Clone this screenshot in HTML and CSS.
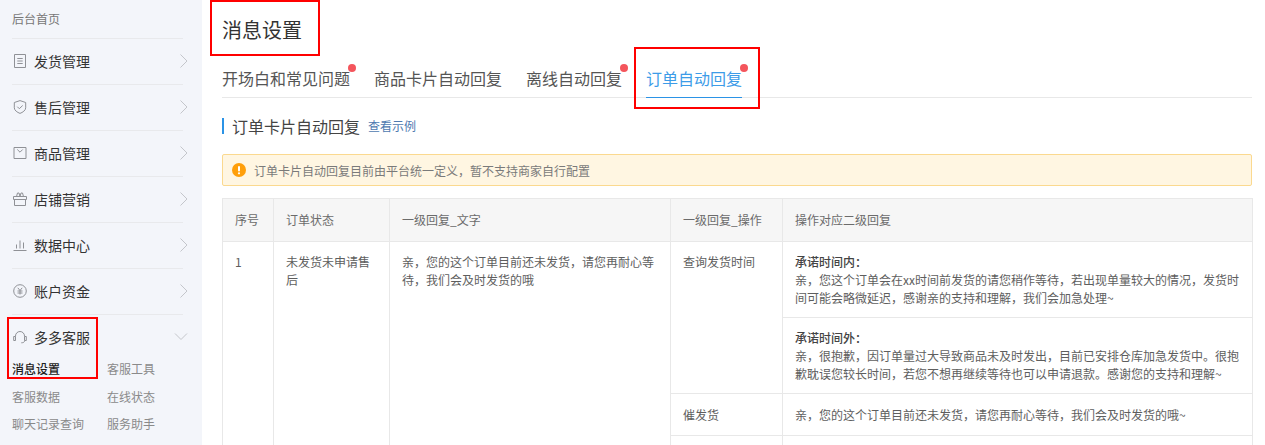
FILE: index.html
```html
<!DOCTYPE html>
<html lang="zh-CN">
<head>
<meta charset="utf-8">
<title>消息设置</title>
<link rel="stylesheet" href="styles.css">
</head>
<body>
<div class="app">
  <aside class="sidebar">
    <div class="home">后台首页</div>
    <div class="nav-item">
      <svg class="nav-icon" viewBox="0 0 14 14"><path d="M1.500 .5h11v13h-11z M4.300 4.500h5.400 M4.300 7h5.400 M4.300 9.500h5.400"/></svg>
      <span class="nav-label">发货管理</span>
      <svg class="chev" viewBox="0 0 10 14"><path d="M1.5 .5l6.500 6.500-6.500 6.500"/></svg>
    </div>
    <div class="nav-item">
      <svg class="nav-icon" viewBox="0 0 14 14"><path d="M7 .6l5.700 1.900v5.300c0 2.600-3 4.600-5.700 5.600-2.700-1-5.700-3-5.700-5.600V2.500z M4.300 6.700l2 2 3.400-3.200"/></svg>
      <span class="nav-label">售后管理</span>
      <svg class="chev" viewBox="0 0 10 14"><path d="M1.5 .5l6.500 6.500-6.500 6.500"/></svg>
    </div>
    <div class="nav-item">
      <svg class="nav-icon" viewBox="0 0 14 14"><path d="M1 1.500h12v11H1z M4.300 3.500L7 6.200l2.700-2.700"/></svg>
      <span class="nav-label">商品管理</span>
      <svg class="chev" viewBox="0 0 10 14"><path d="M1.5 .5l6.500 6.500-6.500 6.500"/></svg>
    </div>
    <div class="nav-item">
      <svg class="nav-icon" viewBox="0 0 14 14"><path d="M.5 4.500h13v3h-13z M1.500 7.500v6h11v-6 M3.500 4.500l1-3.500h1.500l1 3.500 1-3.500h1.500l1 3.500"/></svg>
      <span class="nav-label">店铺营销</span>
      <svg class="chev" viewBox="0 0 10 14"><path d="M1.5 .5l6.500 6.500-6.500 6.500"/></svg>
    </div>
    <div class="nav-item">
      <svg class="nav-icon" viewBox="0 0 14 14"><path d="M.5 12.500h13 M3.500 10.500v-4 M7 10.500v-8 M10.500 10.500v-6"/></svg>
      <span class="nav-label">数据中心</span>
      <svg class="chev" viewBox="0 0 10 14"><path d="M1.5 .5l6.500 6.500-6.500 6.500"/></svg>
    </div>
    <div class="nav-item">
      <svg class="nav-icon" viewBox="0 0 14 14"><circle cx="7" cy="7" r="6.300"/><path d="M4.800 3.800L7 6.500l2.200-2.700 M4.500 7h5 M4.500 9h5 M7 6.500v4"/></svg>
      <span class="nav-label">账户资金</span>
      <svg class="chev" viewBox="0 0 10 14"><path d="M1.5 .5l6.500 6.500-6.500 6.500"/></svg>
    </div>
    <div class="nav-item nav-open">
      <svg class="nav-icon" viewBox="0 0 14 14"><path d="M2.500 6.500V6a4.500 4.500 0 0 1 9 0v.5 M.7 6.500h1.800v4H.7z M11.500 6.500h1.800v4h-1.800z M11.800 10.500c0 1.500-1.500 2.300-3.500 2.300"/></svg>
      <span class="nav-label">多多客服</span>
      <svg class="chev-down" viewBox="0 0 14 10"><path d="M1 1.500l6 6 6-6"/></svg>
    </div>
    <div class="sub-grid">
      <span class="sub-active">消息设置</span><span>客服工具</span>
      <span>客服数据</span><span>在线状态</span>
      <span>聊天记录查询</span><span>服务助手</span>
    </div>
    <div class="mark mark-side"></div>
  </aside>

  <main class="content">
    <h1 class="title">消息设置</h1>
    <div class="mark mark-title"></div>
    <nav class="tabs">
      <div class="tab dot">开场白和常见问题</div>
      <div class="tab">商品卡片自动回复</div>
      <div class="tab dot">离线自动回复</div>
      <div class="tab dot tab-active">订单自动回复</div>
    </nav>
    <div class="mark mark-tab"></div>
    <div class="section-head">
      <h2 class="section-title">订单卡片自动回复</h2>
      <a class="example">查看示例</a>
    </div>
    <div class="notice">
      <svg class="notice-icon" viewBox="0 0 14 14"><circle cx="7" cy="7" r="7" fill="#ff9f0a"/><rect x="6" y="3" width="2" height="5.500" rx="1" fill="#fff"/><circle cx="7" cy="10.300" r="1.100" fill="#fff"/></svg>
      <span>订单卡片自动回复目前由平台统一定义，暂不支持商家自行配置</span>
    </div>
    <table class="grid">
      <colgroup>
        <col class="c1"><col class="c2"><col class="c3"><col class="c4"><col class="c5">
      </colgroup>
      <thead>
        <tr><th>序号</th><th>订单状态</th><th>一级回复_文字</th><th>一级回复_操作</th><th>操作对应二级回复</th></tr>
      </thead>
      <tbody>
        <tr class="r-tall">
          <td rowspan="4">1</td>
          <td rowspan="4">未发货未申请售后</td>
          <td rowspan="4">亲，您的这个订单目前还未发货，请您再耐心等待，我们会及时发货的哦</td>
          <td rowspan="2">查询发货时间</td>
          <td><strong>承诺时间内：</strong><br>亲，您这个订单会在xx时间前发货的请您稍作等待，若出现单量较大的情况，发货时间可能会略微延迟，感谢亲的支持和理解，我们会加急处理~</td>
        </tr>
        <tr class="r-tall">
          <td><strong>承诺时间外：</strong><br>亲，很抱歉，因订单量过大导致商品未及时发出，目前已安排仓库加急发货中。很抱歉耽误您较长时间，若您不想再继续等待也可以申请退款。感谢您的支持和理解~</td>
        </tr>
        <tr class="r-mid">
          <td class="mid">催发货</td>
          <td class="mid">亲，您的这个订单目前还未发货，请您再耐心等待，我们会及时发货的哦~</td>
        </tr>
        <tr class="r-mid"><td>&nbsp;</td><td>&nbsp;</td></tr>
      </tbody>
    </table>
  </main>
</div>
</body>
</html>
```
FILE: styles.css
```css
* { box-sizing: border-box; }
html, body { margin: 0; height: 445px; overflow: hidden; background: #fff; }
body { font-family: "Noto Sans CJK SC", "Noto Sans", sans-serif; color: #4a4a4a; }
.app { display: flex; height: 445px; overflow: hidden; }

.sidebar { position: relative; width: 202px; flex: none; background: #f3f5fa; padding: 0 19px 0 12px; }
.home { height: 39px; font-size: 12px; line-height: 38px; color: #777; border-bottom: 1px solid #e8e9ec; }
.nav-item { height: 46px; display: flex; align-items: center; padding-bottom: 2px; border-bottom: 1px solid #e8e9ec; color: #333; font-size: 14px; }
.nav-open { border-bottom: 0; height: 46px; padding-bottom: 3px; }
.nav-icon { width: 14px; height: 14px; margin: 0 7px 0 1px; flex: none; fill: none; stroke: #8f9196; stroke-width: 1; }
.nav-label { flex: 1; }
.chev { width: 10px; height: 14px; margin-right: -6px; fill: none; stroke: #c4c6cb; stroke-width: 1; }
.chev-down { width: 14px; height: 10px; margin-right: -5px; fill: none; stroke: #c4c6cb; stroke-width: 1; }
.sub-grid { display: grid; grid-template-columns: 95px 1fr; grid-auto-rows: 27.500px; font-size: 12px; line-height: 27.500px; color: #8a8a8a; margin-top: -6px; white-space: nowrap; }
.sub-active { color: #222; font-weight: 500; }

.content { position: relative; flex: 1; min-width: 0; padding: 0 13px 0 20px; }
.title { margin: 0; height: 58px; padding-top: 15px; font-size: 20px; line-height: 30px; font-weight: 400; color: #333; }
.tabs { display: flex; height: 40px; border-bottom: 1px solid #e8e8e8; gap: 24px; }
.tab { position: relative; height: 40px; font-size: 16px; line-height: 41px; color: #555; }
.tab.dot::after { content: ""; position: absolute; top: 6px; right: -6px; width: 8px; height: 8px; border-radius: 50%; background: #f4555c; }
.tab-active { color: #3d9ce8; border-bottom: 1px solid #2b93e6; }
.section-head { display: flex; align-items: center; margin-top: 20px; height: 16px; border-left: 2px solid #2b93e6; padding-left: 8px; line-height: 16px; }
.section-title { margin: 0; font-size: 16px; font-weight: 400; color: #444; }
.example { font-size: 12px; margin-left: 8px; color: #4f7ab0; }
.notice { display: flex; align-items: center; height: 32px; margin-top: 20px; padding-left: 9px; background: #fff6e2; border: 1px solid #fbd98f; border-radius: 2px; font-size: 12px; color: #7a7a7a; }
.notice-icon { width: 14px; height: 14px; margin-right: 8px; }
.grid { margin-top: 12px; width: 1030px; border-collapse: collapse; table-layout: fixed; font-size: 12px; line-height: 18px; color: #5e5e5e; }
.c1 { width: 51px; } .c2 { width: 116px; } .c3 { width: 281px; } .c4 { width: 112px; } .c5 { width: 470px; }
.grid th, .grid td { border: 1px solid #e8e8e8; padding: 0 12px; text-align: left; font-weight: 400; }
.grid th { height: 43px; background: #f6f6f6; color: #6b6b6b; }
.grid td { vertical-align: top; padding-top: 11px; }
.grid td.mid { vertical-align: middle; padding-top: 0; }
.grid strong { font-weight: 500; color: #444; }
.r-tall td { height: 76px; }
.r-mid td { height: 42px; }

.mark { position: absolute; border: 2px solid #f00; pointer-events: none; }
.mark-side { left: 7px; top: 317px; width: 91px; height: 62px; }
.mark-title { left: 8px; top: 0; width: 110px; height: 56px; }
.mark-tab { left: 432px; top: 47px; width: 126px; height: 62px; }
```
